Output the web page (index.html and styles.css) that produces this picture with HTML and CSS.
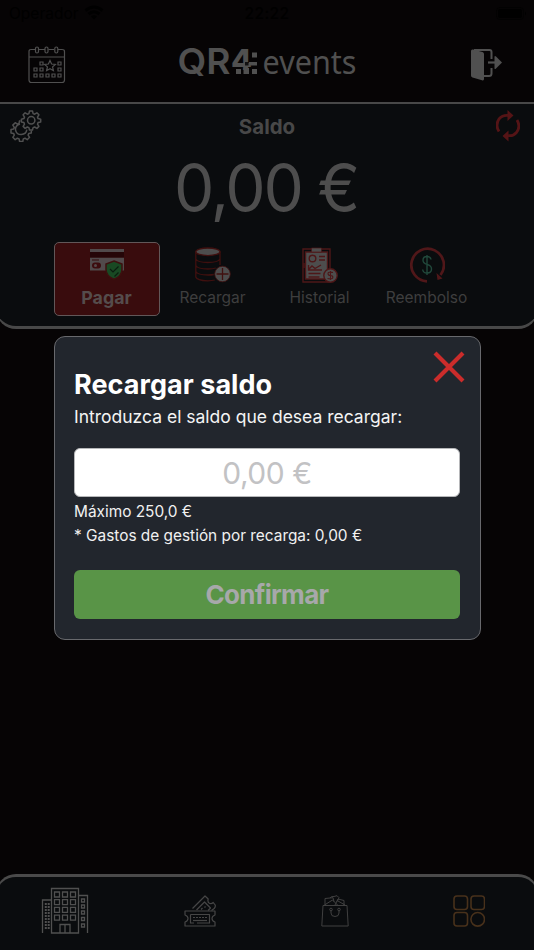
FILE: index.html
```html
<!DOCTYPE html>
<html lang="es">
<head>
<meta charset="utf-8">
<meta name="viewport" content="width=device-width, initial-scale=1">
<title>QR4 events</title>
<link rel="stylesheet" href="styles.css">
</head>
<body>
<div class="app">
  <div class="status">
    <div class="carrier"><span>Operador</span>
      <svg width="20" height="16" viewBox="0 0 20 16"><g fill="none" stroke="#000" stroke-width="3"><path d="M1.5 5.5Q10-1.5 18.500 5.500"/><path d="M4.500 9Q10 4.500 15.500 9"/></g><path d="M7 11.500Q10 9 13 11.500L10 14.500Z"/></svg>
    </div>
    <span class="clock">22:22</span>
    <svg class="battery" width="32" height="14" viewBox="0 0 32 14"><rect x=".5" y=".5" width="27" height="12" rx="3.500" fill="none" stroke="#020202"/><rect x="2" y="2" width="24" height="9" rx="2"/><path d="M29 4.500q2 2 0 4z"/></svg>
  </div>

  <header class="header">
    <svg class="calendar" width="38" height="38" viewBox="0 0 38 38" fill="none" stroke="#505050" stroke-width="1.200">
      <path d="M7 3.500H3Q1 3.500 1 5.500V34Q1 36.500 3.500 36.500H34Q36.500 36.500 36.500 34V5.500Q36.500 3.500 34 3.500H30M11 3.500H17M20.500 3.500H26M1 11H36.500"/>
      <rect x="7.500" y="1" width="3" height="6" rx="1.500"/><rect x="17" y="1" width="3" height="6" rx="1.500"/><rect x="26.800" y="1" width="3" height="6" rx="1.500"/>
      <path d="M12 16h3v3h-3zM30 16h3v3h-3zM6 22h3v3H6zM12 22h3v3h-3zM30 22h3v3h-3zM6 28h3v3H6zM12 28h3v3h-3zM18 28h3v3h-3zM24 28h3v3h-3zM30 28h3v3h-3zM22 14.500l1.600 3.500 3.800.4-2.800 2.500.8 3.800-3.400-1.900-3.400 1.900.8-3.800-2.800-2.500 3.800-.4z"/>
    </svg>
    <svg class="logo" width="186" height="58" viewBox="0 0 186 58" fill="#505050">
      <text class="logo-qr" x="1.500" y="43" textLength="53" lengthAdjust="spacingAndGlyphs">QR</text>
      <text class="logo-four" x="55" y="38.500" textLength="21" lengthAdjust="spacingAndGlyphs">4</text>
      <path d="M67.500 37h5.500v6h-5.500zM76 21.500h5v5h-5zM76 38h5v5h-5zM60 38h5v5h-5zM73 31h8v3.500h-8z"/>
      <path d="M69 31h3.500v3.500h-3.500z" fill="#111011"/>
      <text class="logo-events" x="86.500" y="43" textLength="94" lengthAdjust="spacingAndGlyphs">events</text>
    </svg>
    <svg class="exit" width="32" height="34" viewBox="0 0 32 34">
      <path d="M3 1H18.500Q20.500 1 20.500 3V10M20.500 19V24.500Q20.500 27 18 27H13" fill="none" stroke="#505050" stroke-width="2"/>
      <path d="M0 2Q0 0 2 .5L11.500 3Q13 3.500 13 5V30Q13 32 11 31.300L1.500 28.500Q0 28 0 26.500Z" fill="#505050"/>
      <path d="M17 13.500h7" stroke="#505050" stroke-width="2.200"/><path d="M23.500 7.500Q24 6.500 25 7.500L31 13.500 25 19.500Q24 20.500 23.500 19.500z" fill="#505050"/>
    </svg>
  </header>

  <section class="balance">
    <div class="balance-head">
      <svg class="gears" width="32" height="32" viewBox="0 0 32 32" fill="none" stroke="#505050" stroke-width="1.500" stroke-linejoin="round">
        <path d="M19.500 1h3l.6 2.600 1.500.6 2.300-1.400 2 2-1.400 2.300.6 1.500 2.600.6v2.800l-2.600.6-.6 1.600 1.400 2.200-2 2-2.300-1.400-1.500.6-.6 2.400h-3l-.6-2.400-1.500-.6-2.300 1.400-2-2 1.400-2.200-.6-1.600-2.500-.6V9.200l2.500-.6.6-1.500-1.400-2.300 2-2 2.300 1.400 1.500-.6z"/>
        <circle cx="21.200" cy="10.300" r="3.700"/>
        <path d="M10.500 10.800l-1 .2-.5 2.500-1.600.7-2.200-1.500-2.400 2.400 1.500 2.300-.7 1.600-2.600.5v3.400l2.600.5.7 1.700-1.500 2.200 2.400 2.400 2.200-1.500 1.700.7.500 2.600h3.200l.5-2.600 1.700-.7 2.200 1.500 2.400-2.400-1.500-2.200.7-1.700 2.500-.5v-2.500M10 14q-4.800 1.300-4.500 5.800.8 4.800 5.700 4.800 5.200-.6 5.600-5"/>
      </svg>
      <h1 class="balance-title">Saldo</h1>
      <svg class="refresh" width="24" height="32" viewBox="0 0 24 32">
        <path d="M3 21.500Q-1 15 3 9Q6.500 5 12 5.500M21 10Q25 16.500 20.500 22.500Q17 26.500 12 25.500" fill="none" stroke="#551416" stroke-width="2.800"/>
        <path d="M11.500 0v11L17.500 5.500zM12.500 20.500v11L6.500 26z" fill="#551416"/>
      </svg>
    </div>
    <div class="amount">0,00 €</div>
    <div class="actions">
      <button class="action action-active">
        <svg class="action-icon" width="36" height="36" viewBox="0 0 36 36">
          <path d="M1 2h34v3H1zM1 10.500h34v13H1z" fill="#514a4b"/><path d="M1 5h34v5.500H1z" fill="#250608"/>
          <path d="M3 13h7" stroke="#350a0c"/><rect x="3" y="15.500" width="9" height="6" rx="3" fill="#3c0c0e"/><circle cx="6.500" cy="18.500" r="1.500" fill="#54494a"/>
          <path d="M25 14l8 3v5.500q0 6.500-8 9.800-8-3.300-8-9.800V17z" fill="#194923" stroke="#3d100f" stroke-width="1.500"/>
          <path d="M21 22l3 3 5.500-5.500M25.500 29.500l4-4" fill="none" stroke="#0b1d10" stroke-width="1.200"/>
        </svg><span>Pagar</span>
      </button>
      <button class="action">
        <svg class="action-icon" width="36" height="36" viewBox="0 0 36 36" fill="none" stroke="#40100f" stroke-width="1.300">
          <path d="M.8 4.500V30q1 3.500 12 3.800 4.500 0 7-.8M25 4.500V18M.8 12q2 3.500 12 3.500t12.200-3.500M.8 18.500q2 3.500 12 3.500 5 0 8-1M.8 24.500q2 3.500 12 3.500 4 0 6-.5"/>
          <ellipse cx="12.900" cy="4.800" rx="12.100" ry="3.800" fill="#4d4d4d"/>
          <circle cx="27.500" cy="27" r="7.800" fill="#4d4d4d" stroke-width=".8"/><path d="M21.500 27h12M27.500 21v12"/>
        </svg><span>Recargar</span>
      </button>
      <button class="action">
        <svg class="action-icon" width="36" height="36" viewBox="0 0 36 36" fill="none" stroke="#4e1718" stroke-width="1.400">
          <path d="M1 2h27v33H1z"/><path d="M3.500 5h22v27h-22z" fill="#4d4d4d"/><path d="M9.500 1h10v4h-10z" fill="#4d4d4d" stroke-width=".7"/>
          <circle cx="10.500" cy="11.500" r="3.300"/><path d="M17 9.500h6M17 13h6M6.500 18v5H20M7 22l3-3 3 2.500 6-3.500M6.500 26.500h12M6.500 30h11M2 16v5" />
          <circle cx="28.500" cy="28.500" r="6.700" fill="#4d4d4d"/><path d="M31 25.500q-5-1-5 1t2.500 2 2.300 2-5.300 1M28.500 24v9" stroke-width="1.100"/>
        </svg><span>Historial</span>
      </button>
      <button class="action">
        <svg class="action-icon" width="36" height="36" viewBox="0 0 36 36" fill="none">
          <path d="M18 34.300A16.300 16.300 0 1 1 31.500 28" stroke="#501719" stroke-width="2.700"/><path d="M27.500 26l1 7 5-1.500z" fill="#501719"/>
          <path d="M22 12.500q-.5-3-4-3-4 0-4 3.700 0 3 4 4.200 4.500 1.200 4.500 4.600 0 4-4.500 4-4 0-4.300-3.500M18 8v20" stroke="#21483b" stroke-width="1.400"/>
        </svg><span>Reembolso</span>
      </button>
    </div>
  </section>

  <main class="content"></main>

  <nav class="tabs">
    <div class="tab"><svg class="building" width="48" height="48" viewBox="0 0 48 48" fill="none" stroke="#505050" stroke-width="1.300">
      <path d="M10.500 46V1.500h27V46zM1.500 46V13H10M38 8.500h8.500V46"/>
      <path d="M13.500 5h5v5h-5zM21.500 5h5v5h-5zM29.500 5h5v5h-5zM13.500 12.700h5v5h-5zM21.500 12.700h5v5h-5zM29.500 12.700h5v5h-5zM13.500 20.400h5v5h-5zM21.500 20.400h5v5h-5zM29.500 20.400h5v5h-5zM13.500 28.100h5v5h-5zM21.500 28.100h5v5h-5zM29.500 28.100h5v5h-5zM19 46v-8.500h10V46M24 38v8M40.500 12h3v3h-3zM40.500 18h3v3h-3zM40.500 24h3v3h-3zM40.500 30.500h3v3h-3zM40.500 37h3v3h-3z"/>
      <path d="M4.800 16v27M7.700 16v27" stroke-width="2" stroke-dasharray="2 1"/>
    </svg></div>
    <div class="tab"><svg width="32" height="32" viewBox="0 0 32 32" fill="none" stroke="#464646" stroke-width="1.200" stroke-linejoin="round">
      <path d="M1 16h30v4q-3 1-3 3.500t3 3.500v4H1v-4q3-1 3-3.500T1 20zM6.500 19.500h19V28H13M6.500 19.500V28H10"/>
      <path d="M9 22.500h14" stroke-dasharray="2 1"/><path d="M9 25.500h14"/>
      <path d="M8.500 13.500L21 1l3.200 3q-1 3.500 1.500 4.500 2 .5 3.500-1l2 2.500q.5 2-1 3.500L27.500 15.500M12.500 15l8-8 6 6-2.500 2.500M17 14.500l1.500-1.500M20.500 12.500l1-1"/>
    </svg></div>
    <div class="tab"><svg width="28" height="32" viewBox="0 0 28 32" fill="none" stroke="#404040">
      <path d="M2 10.500h24L27.200 31H.8zM4 10V3.500l8-.8 1 4M9 3q1-2 4-1.500l3-.8 2 2-2 4M3.500 10l8-5 5 5M14 10l3-6 6 1.500v4.500M17 6l7 4"/><circle cx="10" cy="14.500" r="1.300"/><circle cx="18" cy="14.500" r="1.300"/><path d="M10 15.500V18q0 3.500 4 3.500t4-3.500v-2.500"/>
    </svg></div>
    <div class="tab"><svg width="32" height="32" viewBox="0 0 32 32" fill="none" stroke="#48311b" stroke-width="1.600"><rect x="1" y="1" width="13.500" height="13.500" rx="3"/><rect x="18" y="1" width="13.500" height="13.500" rx="3"/><rect x="1" y="17.500" width="13.500" height="13.500" rx="3"/><circle cx="24.700" cy="24.300" r="6.800"/></svg></div>
  </nav>

  <div class="modal" role="dialog" aria-modal="true">
    <svg class="close" width="32" height="32" viewBox="0 0 32 32"><path d="M2 2L30 30M30 2L2 30" stroke="#cb2c2b" stroke-width="4.200"/></svg>
    <h2 class="modal-title">Recargar saldo</h2>
    <p class="intro">Introduzca el saldo que desea recargar:</p>
    <div class="field">0,00 €</div>
    <p class="note note-max">Máximo 250,0 €</p>
    <p class="note note-fee">* Gastos de gestión por recarga: 0,00 €</p>
    <button class="confirm">Confirmar</button>
  </div>
</div>
</body>
</html>
```
FILE: styles.css
```css
* { box-sizing: border-box; }
body { margin: 0; background: #060405; font-family: Inter, sans-serif; }
h1, h2, p { margin: 0; }
button { font: inherit; border: 0; padding: 0; background: none; }
svg { display: block; flex: none; }
.app { position: relative; width: 534px; height: 950px; overflow: hidden; display: flex; flex-direction: column; color: #4d4d4d; }

.status { height: 28px; display: grid; grid-template-columns: 1fr auto 1fr; align-items: center; padding: 0 6px 0 9px; color: #000; font-size: 15.500px; line-height: 28px; }
.carrier { display: flex; gap: 5px; }
.carrier svg { margin-top: 5px; }
.clock { font-weight: 500; letter-spacing: 0.4px; margin-left: -3px; }
.battery { justify-self: end; }

.header { height: 74px; display: flex; justify-content: space-between; padding: 2px 31px 0 28px; }
.calendar { margin-top: 16px; }
.logo { overflow: visible; margin-top: 1px; }
.exit { margin-top: 19px; }
.logo-qr { font: 600 36px Inter, sans-serif; }
.logo-four { font: 800 29px Inter, sans-serif; }
.logo-events { font: 400 32.500px "Noto Sans", sans-serif; }

.balance { height: 227px; background: #0a0c0e; border: solid #484848; border-width: 2px 1px 3px; border-color: #484848 transparent; border-radius: 0 0 20px 20px; margin: 0 -4px; padding: 6px 4px 0; }
.balance-head { height: 32px; display: flex; justify-content: space-between; padding: 0 13px 0 9px; }
.balance-title { font-size: 20.500px; font-weight: 700; line-height: 34px; color: #484848; margin-right: 4px; }
.amount { height: 100px; text-align: center; font-size: 64px; line-height: 92px; letter-spacing: -2.2px; text-indent: -2px; }
.actions { display: flex; margin: 0 52.500px; }
.action { flex: 1; height: 74px; display: flex; flex-direction: column; align-items: center; border: 1px solid transparent; color: #3e3e3e; font-size: 15.500px; line-height: 20px; letter-spacing: 0; }
.action:not(.action-active) { padding-right: 1px; }
.action-icon { margin: 4px 0 5px; }
.action-active { background: #390c0d; border-color: #625758; border-radius: 5px; color: #554c4c; font-size: 17.800px; font-weight: 700; }

.content { flex: 1; }
.tabs { height: 76px; margin: 0 -4px; display: flex; background: #0a0c0e; border: solid transparent; border-width: 3px 1px 0; border-top-color: #4a4a4a; border-radius: 20px 20px 0 0; padding: 0 3px 5px; }
.tab { flex: 1; display: flex; align-items: center; justify-content: center; }
.tab:first-child { padding-right: 6px; }
.tab:nth-child(2) { padding-right: 5px; }
.tab:nth-child(3) { padding-right: 3px; }
.tab:last-child { padding-left: 2px; }

.modal { position: absolute; left: 53.500px; top: 335.500px; width: 427px; height: 304.500px; padding: 32px 19.500px 0; border: 1px solid #68696d; border-radius: 11px; background: #22262d; color: #fff; display: flex; flex-direction: column; }
.close { position: absolute; right: 15px; top: 14px; }
.modal-title { font-size: 27px; line-height: 32px; font-weight: 700; letter-spacing: 0.05px; }
.intro { margin-top: 4px; font-size: 17.500px; line-height: 24px; color: #f4f4f4; }
.field { margin-top: 19px; height: 49px; border: 1px solid #b6b7b9; border-radius: 6px; background: #fff; color: #c2c2c4; text-align: center; font-size: 30px; line-height: 49px; letter-spacing: -0.5px; }
.note { font-size: 15.400px; line-height: 20px; color: #f1f1f1; }
.note-max { margin-top: 5px; }
.note-fee { margin-top: 4px; }
.confirm { margin-top: 24px; height: 49px; border-radius: 6px; background: #599447; color: #a7a8aa; font-weight: 700; font-size: 26px; line-height: 49px; letter-spacing: -0.7px; }
```
